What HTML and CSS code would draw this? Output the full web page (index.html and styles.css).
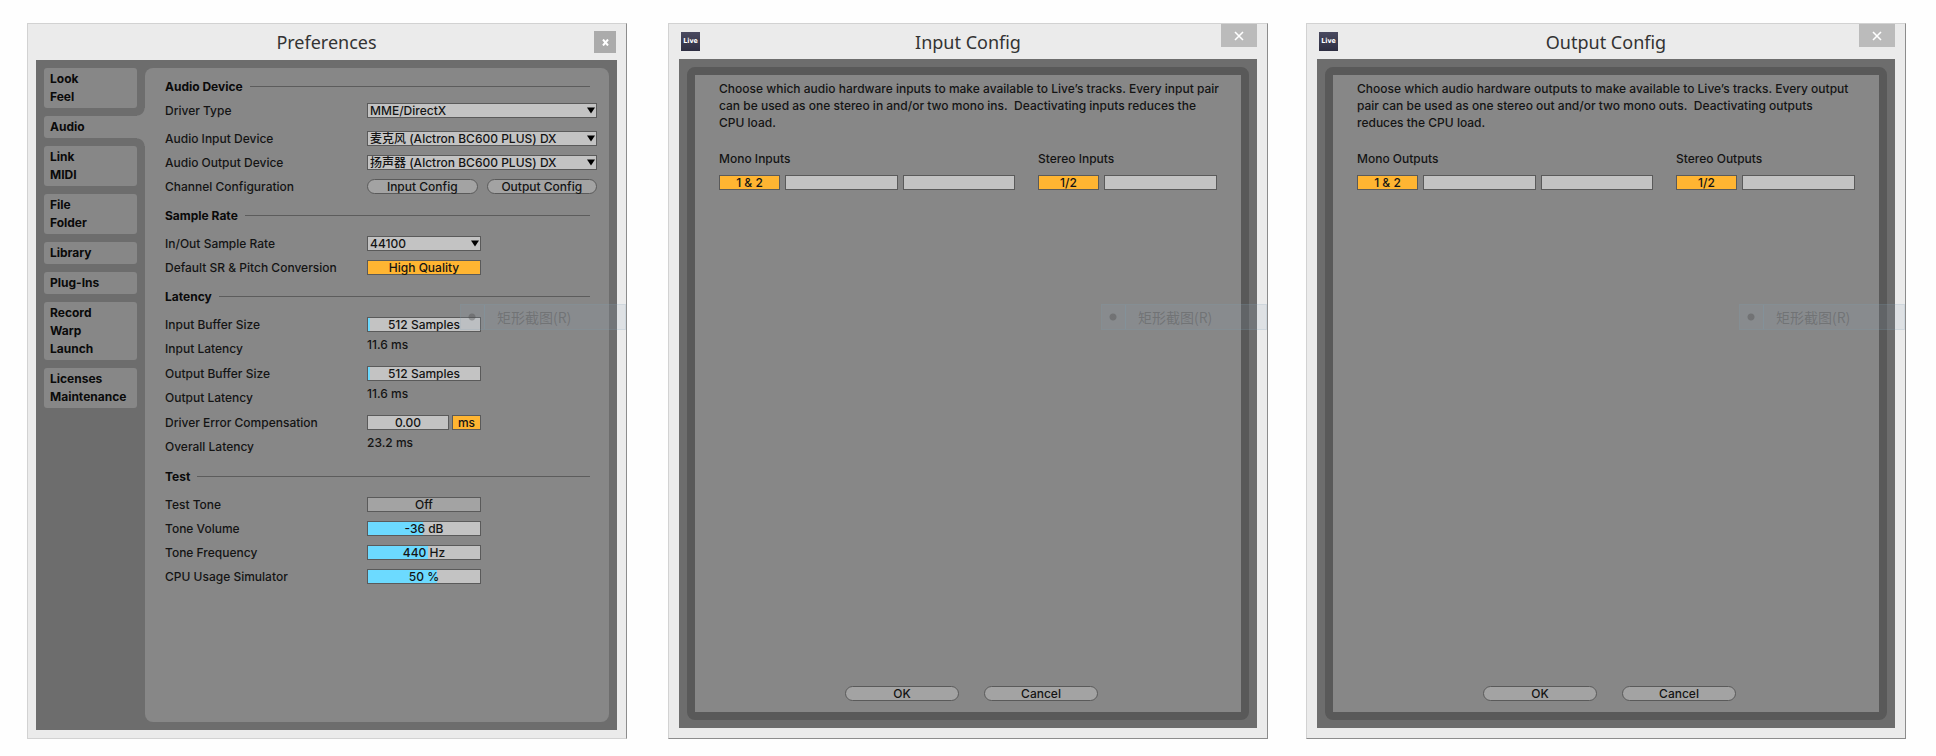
FILE: index.html
```
<!DOCTYPE html>
<html lang="en">
<head>
	<title>Preferences</title>
	<meta charset="utf-8">
	<meta name="viewport" content="width=device-width, initial-scale=1.0">
	<link rel="stylesheet" href="styles.css">
</head>
<body>
	<section class="window prefs">
		<header class="titlebar">
			<h1 class="title">Preferences</h1>
			<button class="close close-small" aria-label="Close">
				<svg width="7" height="7" viewBox="0 0 7 7"><path d="M1 0.5L6 6.5M6 0.5L1 6.5" stroke="#fff" stroke-width="2"/></svg>
			</button>
		</header>

		<div class="client">
			<nav class="tabs">
				<a href="#look" class="tab">Look<br>Feel</a>
				<a href="#audio" class="tab active">Audio</a>
				<a href="#link" class="tab">Link<br>MIDI</a>
				<a href="#file" class="tab">File<br>Folder</a>
				<a href="#library" class="tab">Library</a>
				<a href="#plugins" class="tab">Plug-Ins</a>
				<a href="#record" class="tab">Record<br>Warp<br>Launch</a>
				<a href="#licenses" class="tab">Licenses<br>Maintenance</a>
			</nav>

			<form class="panel">
				<div class="group">
					<h2 class="heading tight">Audio Device</h2>
					<div class="row spaced">
						<label for="driver">Driver Type</label>
						<div class="select">
							<select id="driver"><option>MME/DirectX</option></select>
							<svg class="arrow" width="8" height="7" viewBox="0 0 8 7"><path d="M0 0.5H8L4 6.5Z"/></svg>
						</div>
					</div>
					<div class="row">
						<label for="indev">Audio Input Device</label>
						<div class="select">
							<select id="indev"><option>麦克风 (Alctron BC600 PLUS) DX</option></select>
							<svg class="arrow" width="8" height="7" viewBox="0 0 8 7"><path d="M0 0.5H8L4 6.5Z"/></svg>
						</div>
					</div>
					<div class="row">
						<label for="outdev">Audio Output Device</label>
						<div class="select">
							<select id="outdev"><option>扬声器 (Alctron BC600 PLUS) DX</option></select>
							<svg class="arrow" width="8" height="7" viewBox="0 0 8 7"><path d="M0 0.5H8L4 6.5Z"/></svg>
						</div>
					</div>
					<div class="row">
						<span>Channel Configuration</span>
						<div class="pair">
							<button type="button" class="pill">Input Config</button>
							<button type="button" class="pill">Output Config</button>
						</div>
					</div>
				</div>

				<div class="group">
					<h2 class="heading">Sample Rate</h2>
					<div class="row">
						<label for="rate">In/Out Sample Rate</label>
						<div class="select half">
							<select id="rate"><option>44100</option></select>
							<svg class="arrow" width="8" height="7" viewBox="0 0 8 7"><path d="M0 0.5H8L4 6.5Z"/></svg>
						</div>
					</div>
					<div class="row">
						<label for="quality">Default SR &amp; Pitch Conversion</label>
						<button type="button" id="quality" class="toggle half on">High Quality</button>
					</div>
				</div>

				<div class="group">
					<h2 class="heading">Latency</h2>
					<div class="row">
						<label for="inbuf">Input Buffer Size</label>
						<div class="slider half" style="--fill: 2%">
							<input type="range" id="inbuf" min="0" max="100" value="2">
							<output for="inbuf">512 Samples</output>
						</div>
					</div>
					<div class="row readout">
						<span>Input Latency</span>
						<span class="value">11.6 ms</span>
					</div>
					<div class="row">
						<label for="outbuf">Output Buffer Size</label>
						<div class="slider half" style="--fill: 2%">
							<input type="range" id="outbuf" min="0" max="100" value="2">
							<output for="outbuf">512 Samples</output>
						</div>
					</div>
					<div class="row readout">
						<span>Output Latency</span>
						<span class="value">11.6 ms</span>
					</div>
					<div class="row">
						<label for="comp">Driver Error Compensation</label>
						<div class="unit half">
							<input type="text" id="comp" class="number" value="0.00">
							<button type="button" class="toggle on">ms</button>
						</div>
					</div>
					<div class="row readout">
						<span>Overall Latency</span>
						<span class="value">23.2 ms</span>
					</div>
				</div>

				<div class="group">
					<h2 class="heading">Test</h2>
					<div class="row">
						<label for="tone">Test Tone</label>
						<button type="button" id="tone" class="toggle half">Off</button>
					</div>
					<div class="row">
						<label for="volume">Tone Volume</label>
						<div class="slider half" style="--fill: 49%">
							<input type="range" id="volume" min="0" max="100" value="49">
							<output for="volume">-36 dB</output>
						</div>
					</div>
					<div class="row">
						<label for="freq">Tone Frequency</label>
						<div class="slider half" style="--fill: 54%">
							<input type="range" id="freq" min="0" max="100" value="54">
							<output for="freq">440 Hz</output>
						</div>
					</div>
					<div class="row">
						<label for="cpu">CPU Usage Simulator</label>
						<div class="slider half" style="--fill: 62%">
							<input type="range" id="cpu" min="0" max="100" value="62">
							<output for="cpu">50 %</output>
						</div>
					</div>
				</div>
			</form>
		</div>
		<div class="ghost" lang="zh"><i class="dot"></i><span>矩形截图(R)</span></div>
	</section>

	<div class="dialogs">
		<section class="window dialog">
			<header class="titlebar">
				<span class="logo">Live</span>
				<h1 class="title">Input Config</h1>
				<button class="close" aria-label="Close">
					<svg width="10" height="10" viewBox="0 0 10 10"><path d="M1 1L9 9M9 1L1 9" stroke="#fff" stroke-width="1.6"/></svg>
				</button>
			</header>
			<div class="client">
				<div class="frame">
					<p class="text">Choose which audio hardware inputs to make available to Live’s tracks. Every input pair can be used as one stereo in and/or two mono ins.&nbsp; Deactivating inputs reduces the<br>CPU load.</p>
					<div class="channels">
						<div class="mono">
							<h2 class="label">Mono Inputs</h2>
							<div class="slots">
								<button class="toggle on">1 &amp; 2</button>
								<button class="slot" aria-label="Mono inputs 3 and 4"></button>
								<button class="slot" aria-label="Mono inputs 5 and 6"></button>
							</div>
						</div>
						<div class="stereo">
							<h2 class="label">Stereo Inputs</h2>
							<div class="slots">
								<button class="toggle on">1/2</button>
								<button class="slot" aria-label="Stereo input 3/4"></button>
							</div>
						</div>
					</div>
					<footer class="actions">
						<button class="pill">OK</button>
						<button class="pill">Cancel</button>
					</footer>
				</div>
			</div>
			<div class="ghost" lang="zh"><i class="dot"></i><span>矩形截图(R)</span></div>
		</section>

		<section class="window dialog">
			<header class="titlebar">
				<span class="logo">Live</span>
				<h1 class="title">Output Config</h1>
				<button class="close" aria-label="Close">
					<svg width="10" height="10" viewBox="0 0 10 10"><path d="M1 1L9 9M9 1L1 9" stroke="#fff" stroke-width="1.6"/></svg>
				</button>
			</header>
			<div class="client">
				<div class="frame">
					<p class="text">Choose which audio hardware outputs to make available to Live’s tracks. Every output pair can be used as one stereo out and/or two mono outs.&nbsp; Deactivating outputs<br>reduces the CPU load.</p>
					<div class="channels">
						<div class="mono">
							<h2 class="label">Mono Outputs</h2>
							<div class="slots">
								<button class="toggle on">1 &amp; 2</button>
								<button class="slot" aria-label="Mono outputs 3 and 4"></button>
								<button class="slot" aria-label="Mono outputs 5 and 6"></button>
							</div>
						</div>
						<div class="stereo">
							<h2 class="label">Stereo Outputs</h2>
							<div class="slots">
								<button class="toggle on">1/2</button>
								<button class="slot" aria-label="Stereo output 3/4"></button>
							</div>
						</div>
					</div>
					<footer class="actions">
						<button class="pill">OK</button>
						<button class="pill">Cancel</button>
					</footer>
				</div>
			</div>
			<div class="ghost" lang="zh"><i class="dot"></i><span>矩形截图(R)</span></div>
		</section>
	</div>
</body>
</html>
```
FILE: styles.css
```
*,*::after,*::before{
	box-sizing: border-box;
	margin: 0;
	padding: 0;
}

body{
	min-height: 100vh;
	display: flex;
	gap: 41px;
	padding: 23px 30px 17px 27px;
	background-color: #fefefe;
	color: #141414;
	font: 500 12px/17px Inter, "Noto Sans CJK SC", sans-serif;
}

button, input, select, output{
	font: inherit;
	color: inherit;
}

/* windows */

.window{
	position: relative;
	display: flex;
	flex-direction: column;
	background-color: #ebebeb;
	border: 1px solid #d2d2d2;
	border-right-color: #8c8c8c;
}

.prefs{
	flex: 1 1 600px;
	padding: 0 9px 8px 8px;
}

.dialogs{
	flex: 2 1 1238px;
	display: flex;
	gap: 38px;
}

.dialog{
	flex: 1 1 0;
	padding: 0 10px 10px;
	border-bottom-color: #8c8c8c;
}

.titlebar{
	height: 35px;
	display: grid;
	grid-template-columns: 1fr auto 1fr;
	align-items: center;
}

.prefs .titlebar{
	height: 36px;
}

.title{
	grid-column: 2;
	color: #333;
	font: 400 18px/24px "Noto Sans", sans-serif;
}

.logo{
	width: 19px;
	height: 19px;
	margin-left: 2px;
	background: linear-gradient(#4a4a60, #2e2e42);
	color: #fff;
	font: bold 7px/19px "DejaVu Sans Condensed", "DejaVu Sans", sans-serif;
	text-align: center;
}

.close{
	grid-column: 3;
	justify-self: end;
	align-self: start;
	width: 36px;
	height: 23px;
	display: flex;
	justify-content: center;
	align-items: center;
	border: 0;
	background-color: #bbb;
}

.close-small{
	align-self: center;
	width: 22px;
	height: 22px;
	margin-right: 1px;
	background-color: #ababab;
}

.client{
	flex: 1;
	display: flex;
	padding: 8px;
	background-color: #6d6d6d;
}

/* tabs */

.tabs{
	width: 101px;
	display: flex;
	flex-direction: column;
	gap: 8px;
}

.tab{
	margin-right: 8px;
	padding: 2px 6px;
	border-radius: 3px;
	background-color: #878787;
	color: #0a0a0a;
	font-weight: 700;
	line-height: 18px;
	text-decoration: none;
}

.tab.active{
	position: relative;
	margin-right: 0;
	border-radius: 3px 0 0 3px;
}

/* rounded joints between the active tab and the panel */
.tab.active::before,
.tab.active::after{
	content: "";
	position: absolute;
	right: 0;
	width: 8px;
	height: 8px;
}

.tab.active::before{
	bottom: 100%;
	background: radial-gradient(circle at 0 0, #6d6d6d 7px, #878787 8px);
}

.tab.active::after{
	top: 100%;
	background: radial-gradient(circle at 0 100%, #6d6d6d 7px, #878787 8px);
}

/* panel */

.panel{
	flex: 1;
	display: flex;
	flex-direction: column;
	gap: 5px;
	padding: 6px 12px 20px 20px;
	border-radius: 8px;
	background-color: #878787;
}

.heading{
	height: 24px;
	display: flex;
	align-items: center;
	gap: 7px;
	margin: 0 7px 4px 0;
	color: #0a0a0a;
	font-size: 12px;
	font-weight: 700;
}

.heading.tight{
	margin-bottom: 0;
}

.heading::after{
	content: "";
	flex: 1;
	height: 1px;
	background-color: #5c5c5c;
}

.row{
	height: 24px;
	display: grid;
	grid-template-columns: 202px 1fr;
	align-items: center;
}

.row.spaced{
	margin-bottom: 4px;
}

.row.readout{
	height: 25px;
}

.value{
	align-self: start;
}

.half{
	width: 114px;
}

/* controls */

.select,
.slider{
	display: grid;
	align-items: center;
}

.select > *,
.slider > *{
	grid-area: 1 / 1;
}

.select select{
	appearance: none;
	width: 100%;
	height: 15px;
	padding-left: 2px;
	border: 1px solid #5a5a5a;
	border-radius: 0;
	background-color: #c3c3c3;
	line-height: 13px;
}

.arrow{
	justify-self: end;
	margin-right: 2px;
	pointer-events: none;
}

.slider input{
	appearance: none;
	width: 100%;
	height: 15px;
	border: 1px solid #5a5a5a;
	background: linear-gradient(to right, #6cdaff var(--fill), #c3c3c3 var(--fill));
}

.slider input::-webkit-slider-thumb{
	appearance: none;
	width: 1px;
	height: 13px;
}

.slider output{
	line-height: 15px;
	text-align: center;
	pointer-events: none;
}

.toggle,
.slot,
.number{
	height: 15px;
	border: 1px solid #5a5a5a;
	border-radius: 0;
	background-color: #a3a3a3;
	line-height: 13px;
	text-align: center;
}

.slot,
.number{
	background-color: #c3c3c3;
}

.toggle.on{
	background-color: #ffb532;
}

.unit{
	display: grid;
	grid-template-columns: 1fr 29px;
	gap: 3px;
}

.number{
	width: 100%;
	min-width: 0;
}

.pair{
	display: grid;
	grid-template-columns: 1fr 1fr;
	gap: 9px;
}

.pill{
	height: 15px;
	border: 1px solid #5a5a5a;
	border-radius: 8px;
	background-color: #a3a3a3;
	line-height: 13px;
}

/* config dialogs */

.frame{
	flex: 1;
	display: flex;
	flex-direction: column;
	padding: 5px 24px 11px;
	border: 8px solid #595959;
	border-radius: 8px;
	background-color: #878787;
}

.text{
	margin: 0 -16px 19px 0;
}

.channels{
	display: flex;
	gap: 23px;
}

.mono{
	flex: 296 1 0;
}

.stereo{
	flex: 179 1 0;
}

.label{
	margin-bottom: 8px;
	font-size: 12px;
	font-weight: 500;
}

.slots{
	display: flex;
	gap: 5px;
}

.slots .toggle{
	width: 61px;
}

.slot{
	flex: 1;
}

.actions{
	display: flex;
	justify-content: center;
	gap: 25px;
	margin-top: auto;
	padding-left: 7px;
}

.actions .pill{
	width: 114px;
}

/* fading context menu item */

.ghost{
	position: absolute;
	top: 280px;
	right: 0;
	width: 166px;
	height: 26px;
	display: flex;
	align-items: center;
	gap: 12px;
	border: 1px solid rgba(120, 160, 180, 0.15);
	background-color: rgba(150, 165, 185, 0.15);
	color: rgba(70, 70, 70, 0.35);
	font: 14px/24px "Noto Sans CJK SC", sans-serif;
	pointer-events: none;
}

.dot{
	width: 24px;
	height: 24px;
	border-right: 1px solid rgba(120, 160, 180, 0.3);
	background: radial-gradient(circle at 11px 12px, rgba(70, 70, 70, 0.35) 3px, transparent 4px);
}
```
